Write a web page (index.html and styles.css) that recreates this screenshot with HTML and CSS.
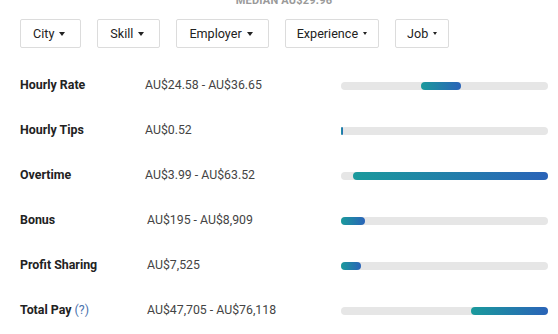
FILE: index.html
```html
<!DOCTYPE html>
<html>
<head>
<meta charset="utf-8">
<link rel="stylesheet" href="styles.css">
</head>
<body>
<div class="page">
  <div class="median">MEDIAN AU$29.96</div>
  <div class="filters">
    <button class="filter big">City<span class="caret"></span></button>
    <button class="filter big">Skill<span class="caret"></span></button>
    <button class="filter big">Employer<span class="caret"></span></button>
    <button class="filter small">Experience<span class="caret"></span></button>
    <button class="filter small">Job<span class="caret"></span></button>
  </div>
  <div class="rows">
    <div class="row">
      <div class="label">Hourly Rate</div>
      <div class="value">AU$24.58 - AU$36.65</div>
      <div class="track"><div class="fill" style="left:38.6%;width:19.3%"></div></div>
    </div>
    <div class="row">
      <div class="label">Hourly Tips</div>
      <div class="value">AU$0.52</div>
      <div class="track"><div class="fill" style="left:0;width:1.2%"></div></div>
    </div>
    <div class="row">
      <div class="label">Overtime</div>
      <div class="value">AU$3.99 - AU$63.52</div>
      <div class="track"><div class="fill" style="left:5.8%;width:94.2%"></div></div>
    </div>
    <div class="row shifted">
      <div class="label">Bonus</div>
      <div class="value">AU$195 - AU$8,909</div>
      <div class="track"><div class="fill" style="left:0;width:11.4%"></div></div>
    </div>
    <div class="row shifted">
      <div class="label">Profit Sharing</div>
      <div class="value">AU$7,525</div>
      <div class="track"><div class="fill" style="left:0;width:9.6%"></div></div>
    </div>
    <div class="row shifted">
      <div class="label">Total Pay <span class="help">(?)</span></div>
      <div class="value">AU$47,705 - AU$76,118</div>
      <div class="track"><div class="fill" style="left:62.8%;width:37.2%"></div></div>
    </div>
  </div>
</div>
</body>
</html>
```

FILE: styles.css
```css
* { box-sizing: border-box; }
html, body { margin: 0; padding: 0; background: #fff; }
body {
  font-family: Roboto, "Liberation Sans", Arial, sans-serif;
  color: #222;
  overflow: hidden;
}
.page { width: 558px; }
.median {
  margin-top: -6px;
  height: 14px;
  line-height: 14px;
  text-align: center;
  font-size: 11px;
  font-weight: 700;
  color: #9a9a9a;
  letter-spacing: 0.2px;
  padding-left: 10px;
}
.filters {
  display: flex;
  gap: 16px;
  padding: 11px 0 0 20px;
}
.filter {
  display: flex;
  align-items: center;
  height: 29px;
  padding: 0 11px;
  border: 1px solid #dcdcdc;
  background: #fff;
  border-radius: 2px;
  font-family: Roboto, "Liberation Sans", Arial, sans-serif;
  font-size: 12.6px;
  color: #222;
  line-height: 27px;
}
.filter .caret {
  display: inline-block;
  width: 0;
  height: 0;
  border-left: 3.5px solid transparent;
  border-right: 3.5px solid transparent;
  border-top: 4px solid #222;
  margin-left: 5px;
}
.filter.big { padding-left: 12px; padding-right: 15px; }
.filter.small .caret {
  border-left-width: 2px;
  border-right-width: 2px;
  border-top-width: 3px;
  margin-left: 5px;
}
.rows {
  padding-top: 14px;
}
.row {
  display: grid;
  grid-template-columns: 125px 196px 207px;
  align-items: center;
  height: 45px;
  padding-left: 20px;
}
.label {
  font-size: 12.4px;
  font-weight: 700;
  color: #222;
}
.value {
  font-size: 12.3px;
  color: #444;
}
.row.shifted .value { padding-left: 2px; }
.help {
  font-weight: 400;
  color: #4a72ad;
}
.track {
  position: relative;
  height: 8px;
  margin-top: 3px;
  border-radius: 4px;
  background: #e6e6e6;
}
.fill {
  position: absolute;
  top: 0;
  bottom: 0;
  border-radius: 4px;
  background: linear-gradient(90deg, #1a9a9c 0%, #2a63b8 100%);
}
```
